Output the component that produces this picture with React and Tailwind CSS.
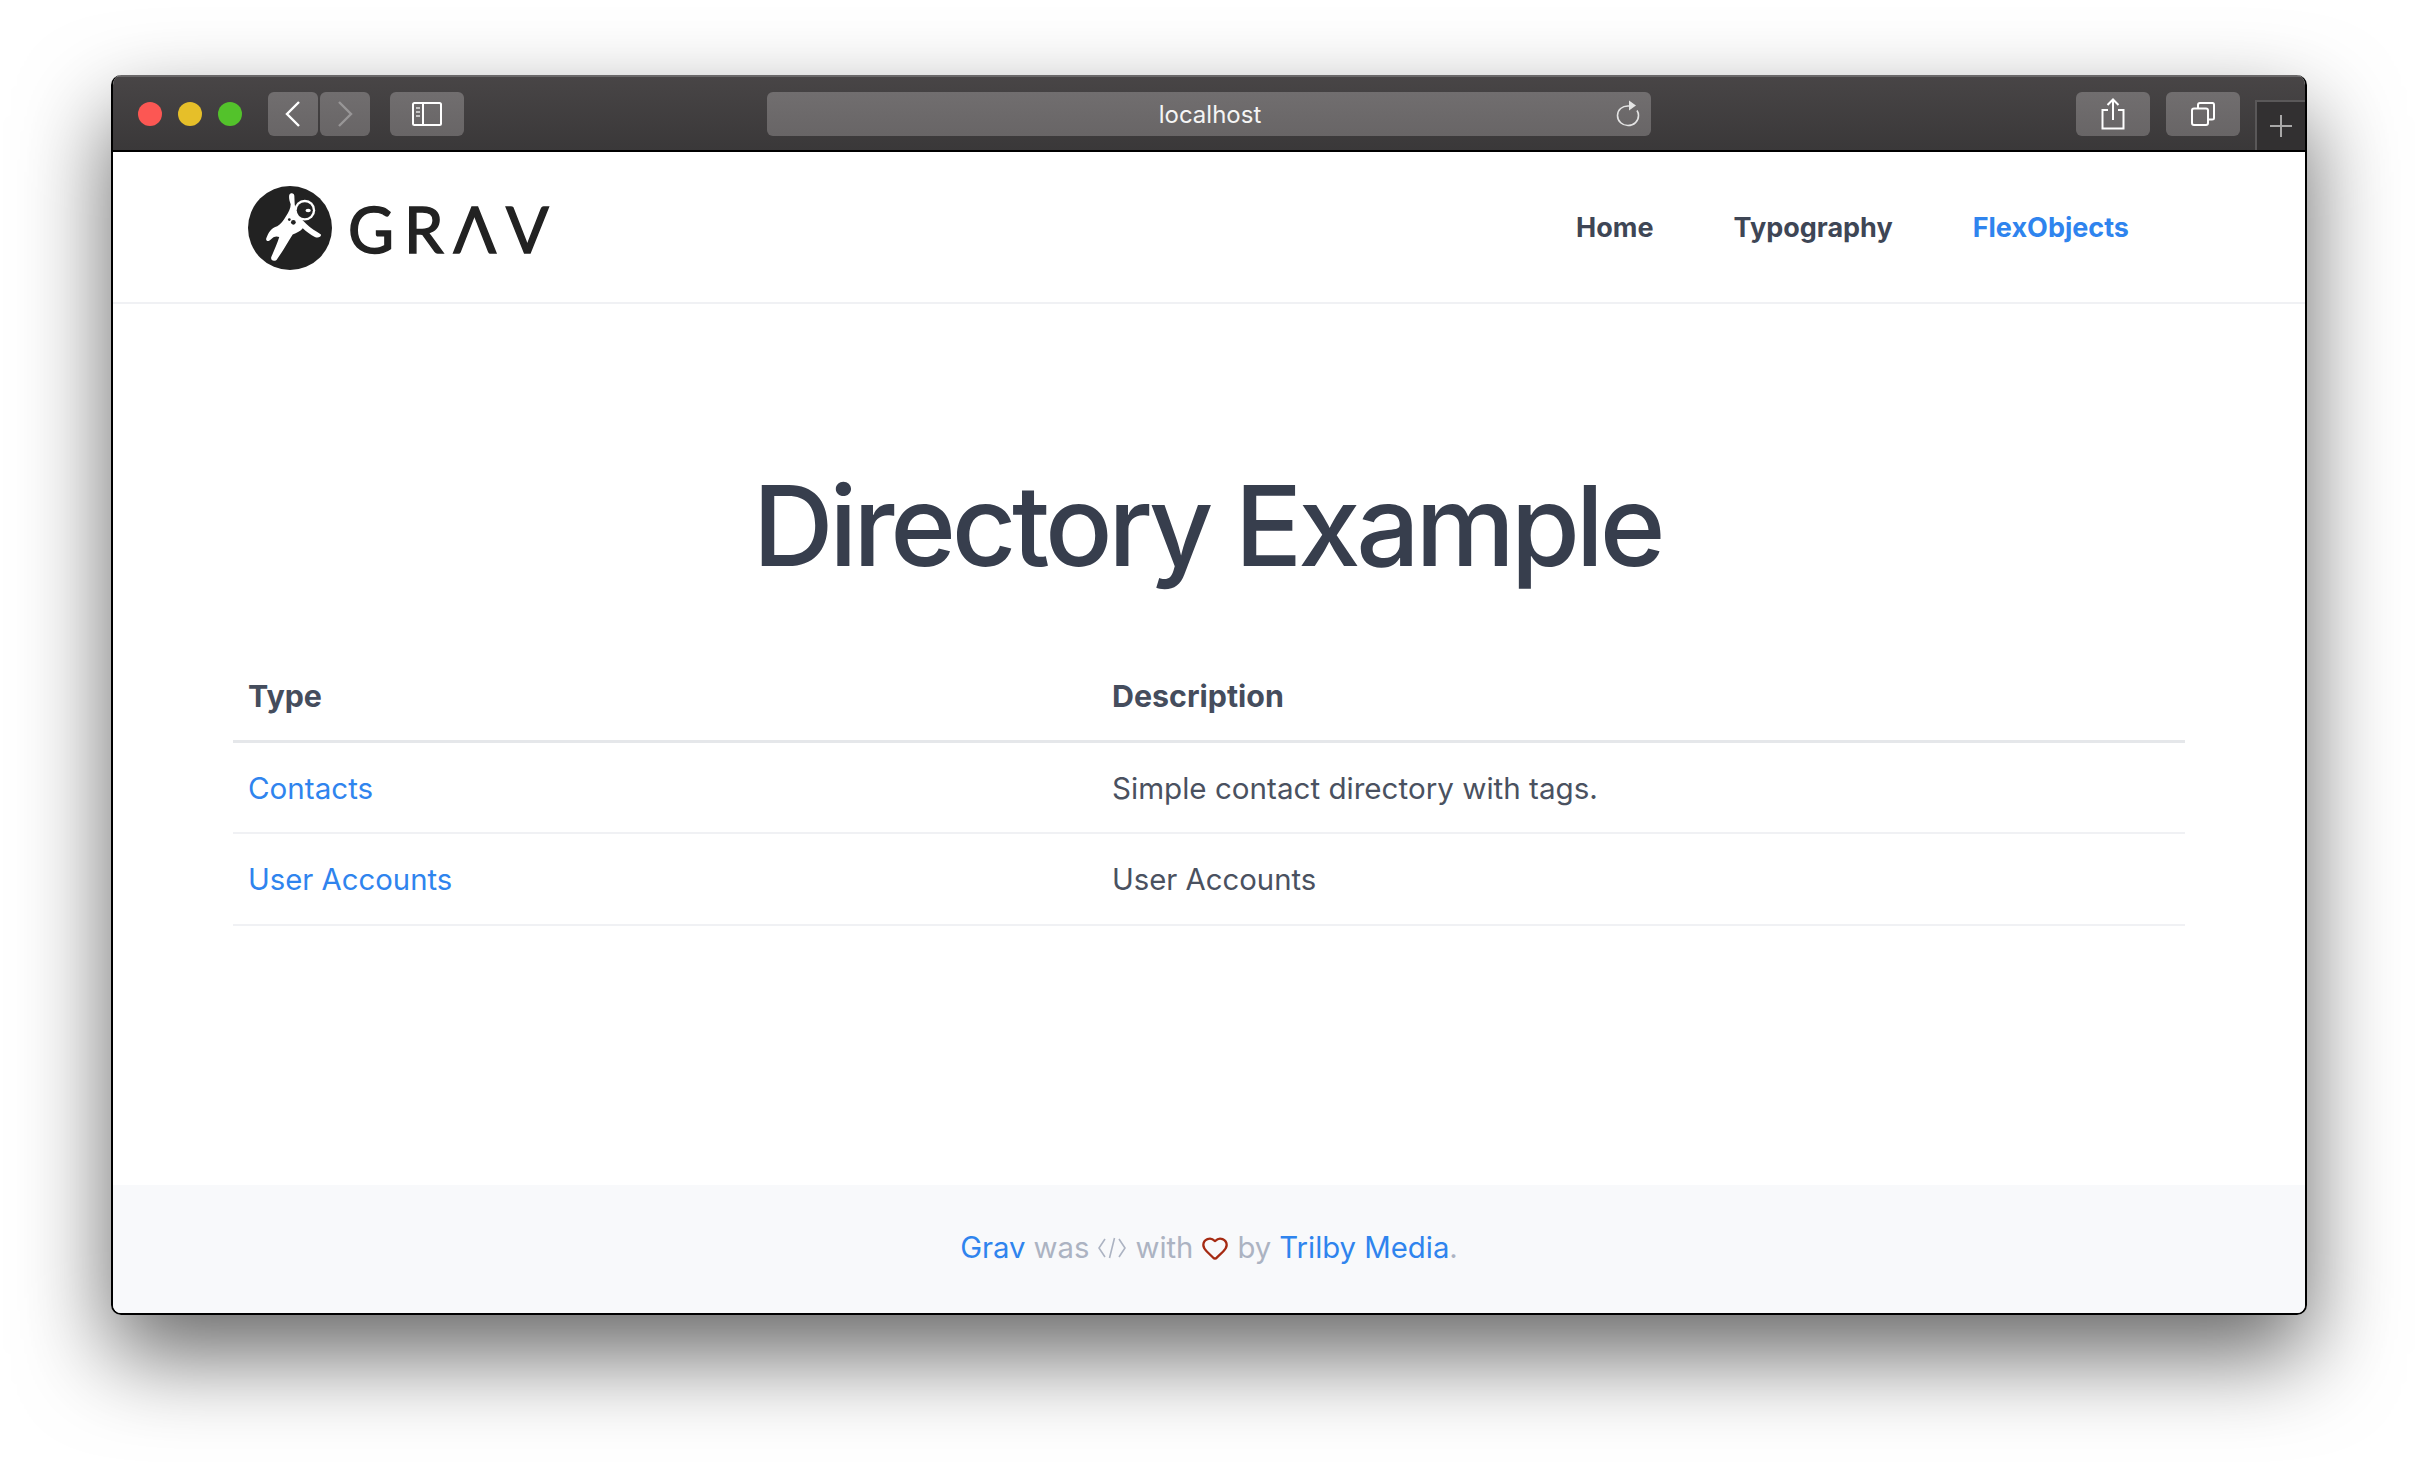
import React from 'react';
import { Heart } from 'lucide-react';

const ToolButton = ({ className = '', children }) => (
  <div className={`h-[44px] rounded-[6px] bg-gradient-to-b from-[#716e6f] to-[#686566] flex items-center justify-center ${className}`}>
    {children}
  </div>
);

const GravLogo = () => (
  <div className="flex items-center pt-[2px]">
    <svg width="84" height="84" viewBox="53 46 250 250" className="shrink-0">
      <circle cx="178" cy="171" r="125" fill="#222222" />
      {/* astronaut */}
      <path d="M176 72 C182 64 192 68 191 78 L192 100 C194 112 197 122 200 132 L226 158 C240 172 256 180 270 190 C272 198 262 202 252 198 C240 192 226 182 216 172 C210 180 198 186 186 190 C172 212 154 244 138 266 C130 272 120 268 122 258 C132 236 140 216 146 198 C136 194 128 198 120 206 C112 214 104 208 108 200 C114 186 122 170 140 166 C150 160 158 150 166 136 C174 124 180 112 180 100 C176 90 174 80 176 72 Z" fill="#ffffff" />
      <circle cx="222" cy="118" r="31" fill="#ffffff" />
      <circle cx="222" cy="118" r="24" fill="#222222" />
      <ellipse cx="232" cy="119" rx="8" ry="5" fill="#ffffff" />
      <circle cx="188" cy="154" r="7" fill="#222222" />
      <circle cx="176" cy="146" r="4" fill="#222222" />
    </svg>
    <span className="ml-[16px] font-['Lato',sans-serif] text-[63px] leading-none font-normal tracking-[10px] text-[#222222] [-webkit-text-stroke:1.5px_#222222]">GRΛV</span>
  </div>
);

export default function App() {
  return (
    <div className="w-[2418px] h-[1462px] bg-white overflow-hidden pt-[75px] pl-[111px] font-['Inter',sans-serif]">
      <div className="w-[2196px] h-[1240px] flex flex-col rounded-[10px] overflow-hidden border-x-2 border-b-2 border-black shadow-[0_40px_90px_rgba(0,0,0,0.6)]">
        {/* Safari toolbar */}
        <div className="h-[77px] shrink-0 flex items-start border-t-2 border-t-[#6a6869] border-b-2 border-b-black bg-gradient-to-b from-[#484546] to-[#3a3839] pl-[25px] relative">
          <div className="flex items-center gap-[16px] mt-[25px]">
            <div className="w-[24px] h-[24px] rounded-full bg-[#fc5753]" />
            <div className="w-[24px] h-[24px] rounded-full bg-[#e6bf29]" />
            <div className="w-[24px] h-[24px] rounded-full bg-[#53c22b]" />
          </div>
          <div className="flex gap-[2px] ml-[26px] mt-[15px]">
            <ToolButton className="w-[50px]">
              <svg width="16" height="26" viewBox="0 0 16 26" fill="none" stroke="#ffffff" strokeWidth="2.4">
                <path d="M14 1 L2 13 L14 25" />
              </svg>
            </ToolButton>
            <ToolButton className="w-[50px]">
              <svg width="16" height="26" viewBox="0 0 16 26" fill="none" stroke="#989697" strokeWidth="2.4">
                <path d="M2 1 L14 13 L2 25" />
              </svg>
            </ToolButton>
          </div>
          <ToolButton className="w-[74px] ml-[20px] mt-[15px]">
            <svg width="30" height="24" viewBox="0 0 30 24" fill="none" stroke="#ffffff" strokeWidth="2">
              <rect x="1" y="1" width="28" height="22" rx="1.5" />
              <path d="M11 1 V23" />
              <path d="M4 6 H8 M4 10 H8 M4 14 H8" stroke="#c4c3c3" />
            </svg>
          </ToolButton>
          <ToolButton className="w-[884px] ml-[303px] mt-[15px] relative text-[24px] font-normal">
            <span className="pt-[2px] pl-[2px] text-[#f5f5f5]">localhost</span>
            <svg className="absolute right-[11px] top-[8px]" width="24" height="27" viewBox="0 0 24 27" fill="none" stroke="#e4e4e4" strokeWidth="1.6">
              <path d="M13 6 C6 5.5 1.5 10 1.5 15.5 C1.5 21.5 6.5 25.5 12 25.5 C18 25.5 22.5 21 22.5 15.5 C22.5 13.5 22 12 21 10.5" />
              <path d="M13 0.5 L20 5.5 L13 10.5 Z" fill="#e4e4e4" stroke="none" />
            </svg>
          </ToolButton>
          <ToolButton className="w-[74px] ml-[425px] mt-[15px]">
            <svg width="24" height="32" viewBox="0 0 24 32" fill="none" stroke="#ffffff" strokeWidth="2">
              <path d="M7 12 H1.5 V30.5 H22.5 V12 H17" />
              <path d="M12 22 V2 M6.5 7 L12 1.5 L17.5 7" />
            </svg>
          </ToolButton>
          <ToolButton className="w-[74px] ml-[16px] mt-[15px]">
            <svg width="24" height="24" viewBox="0 0 24 24" fill="none" stroke="#ffffff" strokeWidth="2">
              <rect x="1" y="6.5" width="16" height="16.5" rx="2" />
              <path d="M7 6 V3 C7 2 7.5 1 9 1 H21.5 C22.5 1 23 1.5 23 3 V16 C23 17 22.5 17.5 21 17.5 H18" />
            </svg>
          </ToolButton>
          <div className="absolute right-0 top-[23px] w-[50px] h-[50px] bg-[#323031] border-l-2 border-t-2 border-[#5a5859] flex items-center justify-center">
            <svg width="24" height="24" viewBox="0 0 24 24" stroke="#a9a8a8" strokeWidth="2">
              <path d="M12 1 V23 M1 12 H23" />
            </svg>
          </div>
        </div>

        {/* Site header */}
        <header className="h-[152px] shrink-0 bg-white border-b-2 border-[#f0f1f4] flex items-center justify-between pl-[135px] pr-[176px]">
          <GravLogo />
          <nav className="flex gap-[80px] pt-[2px] text-[27px] font-bold text-[#3e4655]">
            <a>Home</a>
            <a>Typography</a>
            <a className="text-[#2f84ee]">FlexObjects</a>
          </nav>
        </header>

        {/* Content */}
        <main className="flex-1 bg-white pl-[120px] pr-[120px] pt-[154px]">
          <h1 className="text-center pr-[4px] text-[112px] leading-[1.2] font-medium tracking-[-0.038em] text-[#373e4d]">Directory Example</h1>
          <table className="w-full mt-[61px] text-[29.3px] text-[#4a5160] border-collapse">
            <thead>
              <tr className="border-b-[3px] border-[#e5e7ea]">
                <th className="w-[864px] h-[88px] px-[15px] text-left text-[30.4px] font-bold text-[#454d5d]">Type</th>
                <th className="px-[15px] text-left text-[30.4px] font-bold text-[#454d5d]">Description</th>
              </tr>
            </thead>
            <tbody>
              <tr className="border-b-2 border-[#f0f1f4]">
                <td className="h-[92px] px-[15px] pt-[1px] text-[29.6px] text-[#2f84ee]">Contacts</td>
                <td className="px-[15px] pt-[1px] text-[29.6px]">Simple contact directory with tags.</td>
              </tr>
              <tr className="border-b-2 border-[#f0f1f4]">
                <td className="h-[92px] px-[15px] pt-[2px] text-[#2f84ee]">User Accounts</td>
                <td className="px-[15px] pt-[2px]">User Accounts</td>
              </tr>
            </tbody>
          </table>
        </main>

        {/* Footer */}
        <footer className="h-[128px] shrink-0 bg-[#f8f9fb] flex items-center justify-center gap-[8px] text-[29.3px] text-[#acb3c2] pb-[3px]">
          <a className="text-[#2f84ee]">Grav</a>
          <span>was</span>
          <svg width="30" height="22" viewBox="0 0 30 22" fill="none" stroke="#acb3c2" strokeWidth="1.6">
            <path d="M8 2 L2 11 L8 20 M22 2 L28 11 L22 20 M17.5 1 L12.5 21" />
          </svg>
          <span>with</span>
          <Heart size={28} color="#a52a12" strokeWidth={2} />
          <span>by</span>
          <span><a className="text-[#2f84ee]">Trilby Media</a>.</span>
        </footer>
      </div>
    </div>
  );
}
